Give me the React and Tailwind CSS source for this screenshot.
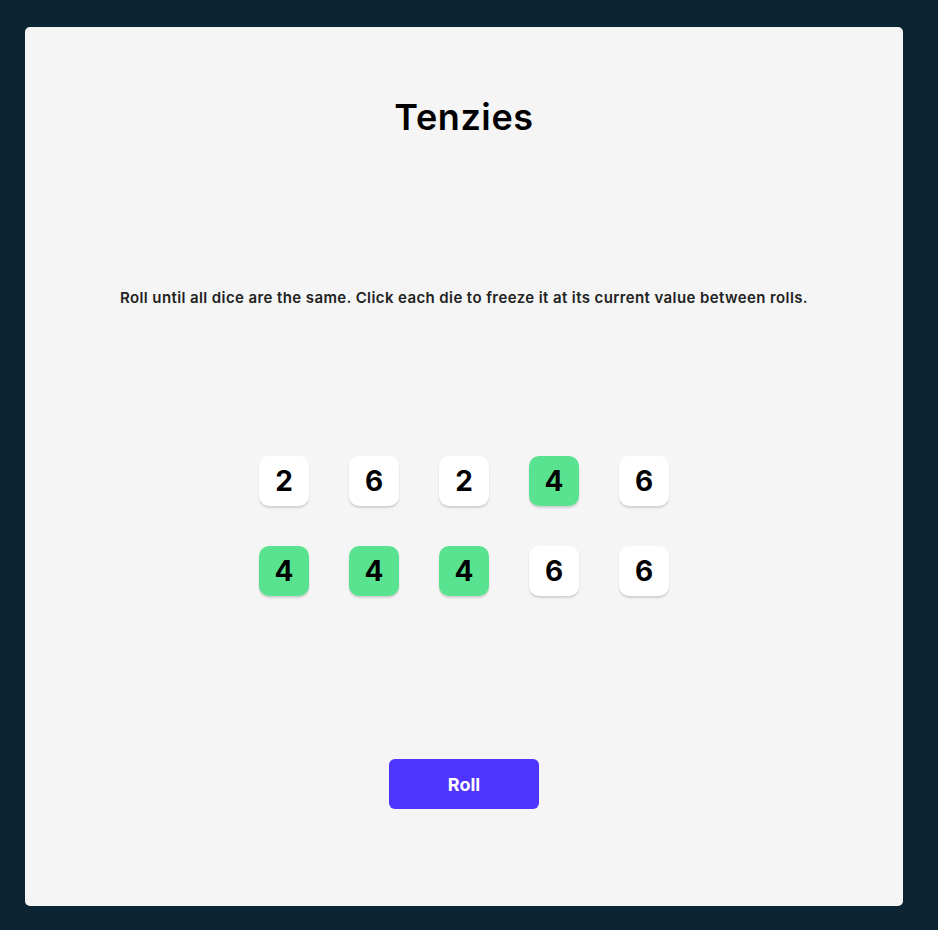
const dice = [
  { value: 2, held: false },
  { value: 6, held: false },
  { value: 2, held: false },
  { value: 4, held: true },
  { value: 6, held: false },
  { value: 4, held: true },
  { value: 4, held: true },
  { value: 4, held: true },
  { value: 6, held: false },
  { value: 6, held: false },
]

function Die({ value, held }) {
  return (
    <button
      className={`flex h-[50px] w-[50px] items-center justify-center rounded-[10px] text-[28px] font-bold text-black shadow-[0_2px_2px_rgba(0,0,0,0.15)] ${
        held ? "bg-[#59E391]" : "bg-white"
      }`}
    >
      {value}
    </button>
  )
}

export default function App() {
  return (
    <div
      className="min-h-[930px] w-full bg-[#0B2434] pl-[25px] pt-[27px]"
      style={{ fontFamily: "Inter, 'Open Sans', sans-serif" }}
    >
      <main className="flex h-[879px] w-[878px] flex-col items-center rounded-[5px] bg-[#F5F5F5]">
        <h1 className="mt-[66px] text-[36px] font-semibold leading-[48px] tracking-[0.6px] text-black">Tenzies</h1>
        <p className="mt-[147px] text-[15px] font-semibold leading-[20px] tracking-[0.4px] text-[#222]">
          Roll until all dice are the same. Click each die to freeze it at its current value between rolls.
        </p>
        <div className="mt-[148px] grid grid-cols-5 gap-[40px]">
          {dice.map((die, i) => (
            <Die key={i} value={die.value} held={die.held} />
          ))}
        </div>
        <button className="mt-[163px] h-[50px] w-[150px] rounded-[6px] bg-[#5035FF] text-[18px] font-bold text-white">
          Roll
        </button>
      </main>
    </div>
  )
}
